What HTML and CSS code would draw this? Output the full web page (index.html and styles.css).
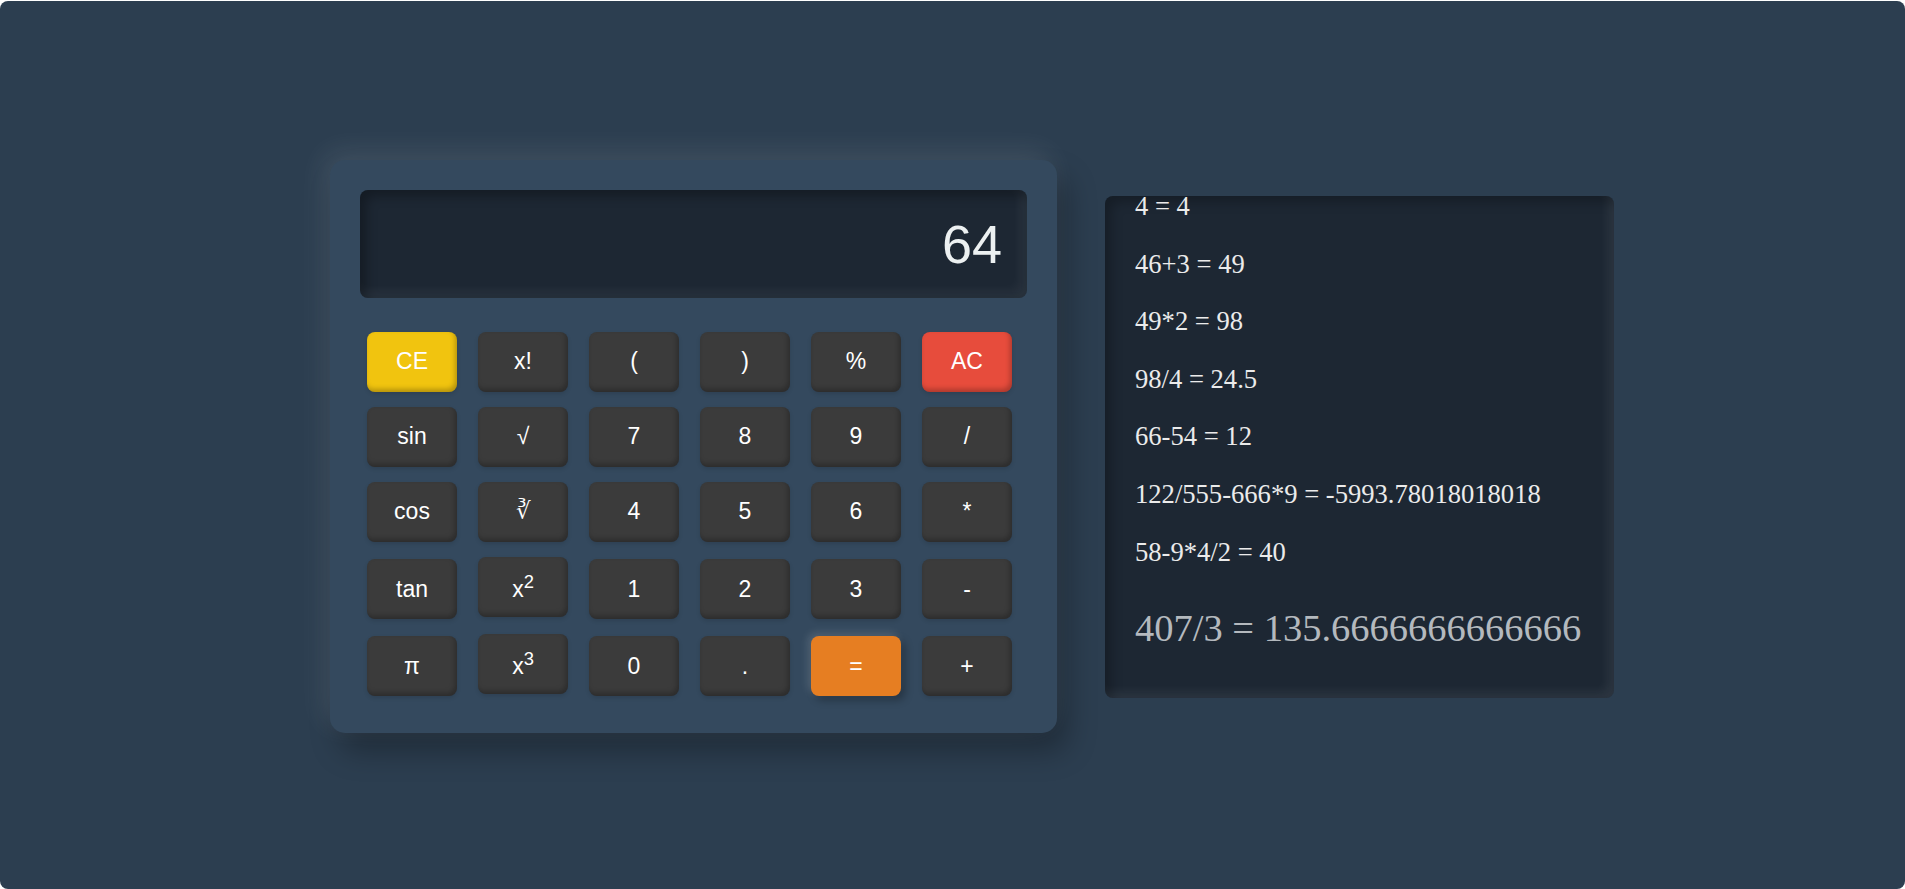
FILE: index.html
```html
<!DOCTYPE html>
<html lang="en">
<head>
<meta charset="utf-8">
<title>Calculator</title>
<link rel="stylesheet" href="styles.css">
</head>
<body>
<main class="page">
  <section class="calculator">
    <div class="display"><span class="display-value">64</span></div>
    <div class="keypad">
      <button class="key key-ce">CE</button>
      <button class="key">x!</button>
      <button class="key">(</button>
      <button class="key">)</button>
      <button class="key">%</button>
      <button class="key key-ac">AC</button>

      <button class="key">sin</button>
      <button class="key">√</button>
      <button class="key">7</button>
      <button class="key">8</button>
      <button class="key">9</button>
      <button class="key">/</button>

      <button class="key">cos</button>
      <button class="key">∛</button>
      <button class="key">4</button>
      <button class="key">5</button>
      <button class="key">6</button>
      <button class="key">*</button>

      <button class="key">tan</button>
      <button class="key">x<sup>2</sup></button>
      <button class="key">1</button>
      <button class="key">2</button>
      <button class="key">3</button>
      <button class="key">-</button>

      <button class="key">π</button>
      <button class="key">x<sup>3</sup></button>
      <button class="key">0</button>
      <button class="key">.</button>
      <button class="key key-eq">=</button>
      <button class="key">+</button>
    </div>
  </section>

  <section class="history">
    <div class="history-list">
      <p class="entry">4 = 4</p>
      <p class="entry">46+3 = 49</p>
      <p class="entry">49*2 = 98</p>
      <p class="entry">98/4 = 24.5</p>
      <p class="entry">66-54 = 12</p>
      <p class="entry">122/555-666*9 = -5993.78018018018</p>
      <p class="entry">58-9*4/2 = 40</p>
      <p class="entry entry-current">407/3 = 135.6666666666666</p>
    </div>
  </section>
</main>
</body>
</html>
```

FILE: styles.css
```css
html {
  background: #ffffff;
}

body {
  margin: 1px 0 0 0;
  font-family: "Liberation Serif", "Times New Roman", serif;
}

.page {
  box-sizing: border-box;
  height: 888px;
  background: #2c3e50;
  border-radius: 8px;
  display: flex;
  align-items: center;
  justify-content: center;
  gap: 48px;
  padding-left: 39px;
  padding-top: 3px;
}

.calculator {
  box-sizing: border-box;
  width: 727px;
  padding: 30px 30px 37px 30px;
  background: #34495e;
  border-radius: 15px;
  box-shadow: -6px -8px 28px rgba(255, 255, 255, 0.1),
              10px 18px 30px rgba(0, 0, 0, 0.3);
  flex-shrink: 0;
}

.display {
  height: 108px;
  background: #1d2733;
  border-radius: 8px;
  box-shadow: inset 6px 6px 12px rgba(0, 0, 0, 0.3),
              inset -6px -6px 12px rgba(255, 255, 255, 0.06);
  display: flex;
  align-items: center;
  justify-content: flex-end;
  padding-right: 25px;
  box-sizing: border-box;
}

.display-value {
  font-family: "Liberation Sans", Arial, sans-serif;
  font-size: 54px;
  color: #ecf0f1;
}

.keypad {
  display: grid;
  grid-template-columns: repeat(6, 90px);
  column-gap: 21px;
  row-gap: 15px;
  align-items: baseline;
  margin-top: 34px;
  padding: 0 15px 0 7px;
}

.key {
  height: 60px;
  width: 90px;
  border: none;
  border-radius: 8px;
  background: #3b3b3b;
  color: #ffffff;
  font-family: "Liberation Sans", Arial, sans-serif;
  font-size: 23px;
  padding: 0;
  box-shadow: inset -2px -3px 5px rgba(0, 0, 0, 0.25),
              0 2px 4px rgba(0, 0, 0, 0.12);
}

.key sup {
  font-size: 0.8em;
}

.key-ce {
  background: #f1c40f;
}

.key-ac {
  background: #e74c3c;
}

.key-eq {
  background: #e67e22;
  box-shadow: -3px -3px 8px rgba(255, 255, 255, 0.15),
              4px 4px 8px rgba(0, 0, 0, 0.3);
}

.history {
  box-sizing: border-box;
  width: 509px;
  height: 502px;
  background: #1d2733;
  border-radius: 8px;
  box-shadow: inset 6px 6px 12px rgba(0, 0, 0, 0.25),
              inset -6px -6px 10px rgba(255, 255, 255, 0.07);
  display: flex;
  flex-direction: column;
  justify-content: flex-end;
  overflow: hidden;
  padding: 0 30px 9px 30px;
  flex-shrink: 0;
}

.history-list {
  flex-shrink: 0;
  display: flow-root;
}

.entry {
  font-size: 26.6px;
  margin: 1em 0;
  color: #ebebeb;
  white-space: nowrap;
}

.entry-current {
  font-size: 38.5px;
  color: #b4b9be;
}
```
